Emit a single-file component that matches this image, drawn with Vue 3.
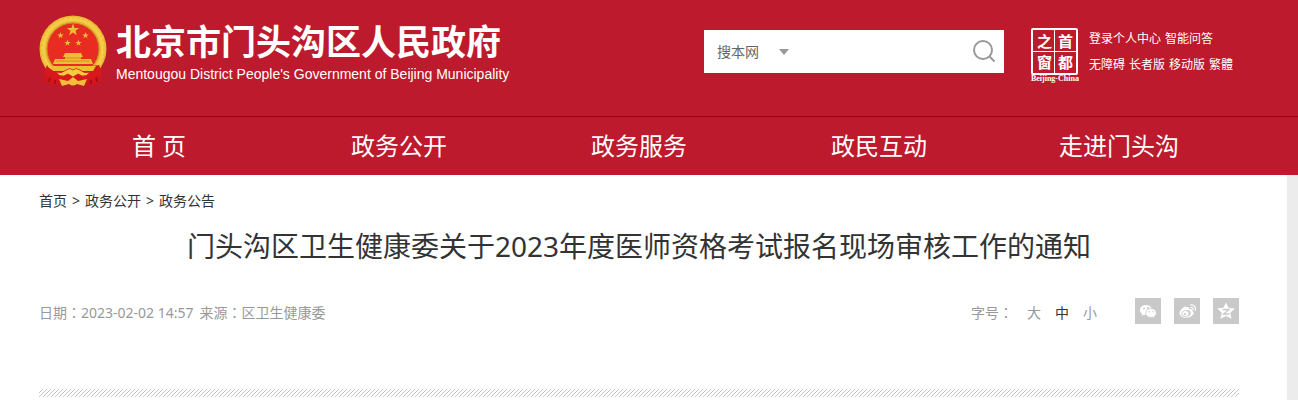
<template>
  <div class="page">
    <header class="header">
      <div class="container top">
        <a class="brand" href="#">
          <svg class="emblem" viewBox="0 0 68 72" aria-hidden="true">
            <path d="M9 48 L59 48 Q64 59 62 66 L53 71 L43 67 H25 L15 71 L6 67 Q4 60 9 48Z" fill="#d5151d" />
            <path d="M12 56 L10 67 M17 59 L16 69 M56 56 L58 67 M51 59 L52 69" stroke="#9c0b17" stroke-width="1.5" />
            <circle cx="34" cy="34" r="33.5" fill="#e9b62f" />
            <circle cx="34" cy="34" r="30" fill="none" stroke="#f4cc48" stroke-width="4" />
            <circle cx="34" cy="34" r="31" fill="none" stroke="#e9b838" stroke-width="1" stroke-dasharray="2 3" />
            <circle cx="34" cy="34" r="26" fill="#e82c22" stroke="#c8871f" stroke-width="1" />
            <g fill="#edbd35">
              <polygon :points="starPoints(34, 15, 6.5)" />
              <polygon v-for="star in smallStars" :key="star.x" :points="starPoints(star.x, star.y, 3.4)" />
              <path d="M26 38h16l2 4h-2v2h10l2 5H14l2-5h10v-2h-2z" />
            </g>
            <path d="M26 43h16M17 46h34" stroke="#d98e22" stroke-width="1" />
            <path d="M8 50 Q10 55 18 56 L60 50 L63 58 Q53 67 42 66 L34 69 L26 66 Q14 67 5 58Z" fill="#d8181d" />
            <path d="M11 51h46l-3 5H14z" fill="#edbd35" />
            <path d="M17 57 Q23 59 27 55 Q31 52 34 55 Q37 52 41 55 Q45 59 51 57 Q48 62 43 61 L39 59 L34 62 L29 59 L25 61 Q20 62 17 57Z" fill="#f6cb42" stroke="#d8181d" stroke-width=".8" />
            <path d="M20 64 L29 66 L34 62 L39 66 L48 64 L45 71 L38 69 Q34 72 30 69 L23 71Z" fill="#f1be37" />
          </svg>
          <span class="brand-text">
            <strong class="brand-name">北京市门头沟区人民政府</strong>
            <span class="brand-en">Mentougou District People's Government of Beijing Municipality</span>
          </span>
        </a>
        <div class="tools">
          <form class="search" role="search" @submit.prevent>
            <div class="scope">
              <select v-model="scope" aria-label="搜索范围">
                <option value="site">搜本网</option>
              </select>
              <svg class="caret" viewBox="0 0 10 6" aria-hidden="true"><path d="M0 0h10L5 6z" fill="#999" /></svg>
            </div>
            <input v-model="keyword" class="keyword" type="text" aria-label="搜索关键词">
            <button class="search-btn" type="submit" aria-label="搜索">
              <svg viewBox="0 0 24 24" fill="none" stroke="#999" stroke-width="2" aria-hidden="true">
                <circle cx="11" cy="10" r="9" />
                <path d="M17 16l5.500 5.500" />
              </svg>
            </button>
          </form>
          <a class="capital" href="#">
            <span class="seal">
              <span v-for="char in sealChars" :key="char" class="seal-char">{{ char }}</span>
            </span>
            <span class="capital-en">Beijing-China</span>
          </a>
          <div class="quick">
            <div v-for="(row, index) in quickLinks" :key="index" class="quick-row">
              <a v-for="item in row" :key="item" href="#">{{ item }}</a>
            </div>
          </div>
        </div>
      </div>
      <nav class="nav">
        <div class="container nav-list">
          <a v-for="item in navItems" :key="item" href="#">{{ item }}</a>
        </div>
      </nav>
    </header>

    <main class="main">
      <div class="container">
        <div class="crumbs">
          <template v-for="(item, index) in crumbs" :key="item">
            <span v-if="index > 0">&gt;</span>
            <a href="#">{{ item }}</a>
          </template>
        </div>
        <h1 class="title">门头沟区卫生健康委关于2023年度医师资格考试报名现场审核工作的通知</h1>
        <div class="meta">
          <p class="source">
            <span>日期<span class="colon">：</span>2023-02-02 14:57</span>
            <span>来源<span class="colon">：</span>区卫生健康委</span>
          </p>
          <div class="meta-right">
            <div class="sizes">
              <span>字号<span class="colon">：</span></span>
              <button
                v-for="item in sizes"
                :key="item"
                type="button"
                :class="{ active: item === size }"
                @click="size = item"
              >{{ item }}</button>
            </div>
            <div class="share">
              <a href="#" aria-label="微信">
                <svg viewBox="0 0 26 26" aria-hidden="true">
                  <path d="M11 7c-3.400 0-6 2.200-6 5 0 1.600.8 3 2.200 3.900L6.600 18l2.300-1.200c.7.2 1.400.2 2.100.2 3.400 0 6-2.200 6-5s-2.600-5-6-5z" fill="#fff" />
                  <path d="M16 10.500c-3 0-5.400 2-5.400 4.500s2.400 4.500 5.400 4.500c.7 0 1.300-.1 1.900-.3l2 1.100-.6-1.900c1.300-.8 2.100-2 2.100-3.400 0-2.500-2.400-4.500-5.400-4.500z" fill="#fff" stroke="#c9c9c9" stroke-width=".8" />
                  <g fill="#c9c9c9"><circle cx="9" cy="10.500" r=".9" /><circle cx="13" cy="10" r=".9" /><circle cx="14.200" cy="13.800" r=".8" /><circle cx="18" cy="13.800" r=".8" /></g>
                </svg>
              </a>
              <a href="#" aria-label="微博">
                <svg viewBox="0 0 26 26" aria-hidden="true">
                  <path d="M11.500 9.500c1.200-.6 3.200-1 3.500.2.200.7-.2 1.300-.2 1.300 2-.4 3.900.2 3.300 2 1.500.5 2 1.500 1.300 3-1 2.300-4 3.800-7.400 3.800-3.500 0-6.500-1.800-6.500-4.500C5.500 12.500 10 7.800 11.800 8.500c.6.200.4.700-.3 1z" fill="#fff" />
                  <ellipse cx="12" cy="15.400" rx="4.800" ry="3.300" fill="#c9c9c9" transform="rotate(-8 12 15.400)" />
                  <ellipse cx="11.500" cy="15.600" rx="3.300" ry="2.500" fill="#fff" />
                  <circle cx="11" cy="16" r="1.100" fill="#c9c9c9" />
                  <path d="M16.500 7c3.300-.7 5.800 2.200 4.700 5.500M16.800 9.600c1.500-.3 2.500.9 2.100 2.300" fill="none" stroke="#fff" stroke-width="1.200" stroke-linecap="round" />
                </svg>
              </a>
              <a href="#" aria-label="QQ空间">
                <svg viewBox="0 0 26 26" aria-hidden="true">
                  <path d="M13 4.500l2.600 5.300 6.200.8-4.500 4.200 1.200 6-5.500-2.900-5.500 2.900 1.200-6-4.500-4.200 6.200-.8z" fill="#fff" />
                  <path d="M9.800 11.500h6.200l-5.500 4.500h6" fill="none" stroke="#c9c9c9" stroke-width="1.300" />
                </svg>
              </a>
            </div>
          </div>
        </div>
        <svg class="divider" aria-hidden="true">
          <defs>
            <pattern id="hatch" width="4" height="4" patternUnits="userSpaceOnUse">
              <path d="M-1 1l2-2M0 4l4-4M3 5l2-2" stroke="#c4c4c4" stroke-width="1" />
            </pattern>
          </defs>
          <rect width="100%" height="100%" fill="url(#hatch)" />
        </svg>
      </div>
    </main>
  </div>
</template>

<script setup>
import { ref } from 'vue'

const scope = ref('site')
const keyword = ref('')
const size = ref('中')

const sizes = ['大', '中', '小']
const sealChars = ['之', '首', '窗', '都']
const navItems = ['首 页', '政务公开', '政务服务', '政民互动', '走进门头沟']
const crumbs = ['首页', '政务公开', '政务公告']
const quickLinks = [
  ['登录个人中心', '智能问答'],
  ['无障碍', '长者版', '移动版', '繁體']
]
const smallStars = [
  { x: 21.5, y: 20.5 },
  { x: 46.5, y: 20.5 },
  { x: 28.5, y: 28 },
  { x: 39.5, y: 28 }
]

// five-pointed star around a centre
const starPoints = (cx, cy, r) => {
  const points = []
  for (let i = 0; i < 10; i++) {
    const radius = i % 2 === 0 ? r : r * 0.4
    const angle = (Math.PI / 5) * i - Math.PI / 2
    points.push(`${cx + radius * Math.cos(angle)},${cy + radius * Math.sin(angle)}`)
  }
  return points.join(' ')
}
</script>

<style>
body {
  margin: 0;
  background: #ececec;
}
</style>

<style scoped>
.page {
  display: flex;
  flex-direction: column;
  min-height: 100vh;
  font-family: "Noto Sans", "Noto Sans CJK SC", sans-serif;
  font-size: 14px;
  line-height: 20px;
  color: #333;
}
a {
  color: inherit;
  text-decoration: none;
}
.container {
  max-width: 1200px;
  margin: 0 auto;
}

/* header */
.header {
  background: #bd1a2d;
  color: #fff;
}
/* keeps the header in line with the article column */
.top,
.nav {
  padding-right: 20px;
}
.header .top {
  display: flex;
  justify-content: space-between;
  align-items: flex-start;
  min-height: 101px;
  padding-top: 15px;
}
.brand {
  display: flex;
  gap: 9px;
}
.emblem {
  width: 68px;
  height: 72px;
}
.brand-text {
  display: flex;
  flex-direction: column;
  padding-top: 4px;
}
.brand-name {
  font-family: "Noto Sans CJK SC", sans-serif;
  font-size: 35px;
  line-height: 42px;
  font-weight: 700;
  white-space: nowrap;
}
.brand-en {
  font-family: "Liberation Sans", Arial, sans-serif;
  font-size: 14px;
  line-height: 26px;
  white-space: nowrap;
}
.tools {
  display: flex;
  align-items: flex-start;
  padding-right: 6px;
}
.search {
  display: flex;
  width: 300px;
  height: 43px;
  margin: 15px 25px 0 0;
  background: #fff;
}
.scope {
  display: flex;
  align-items: center;
  padding-left: 13px;
}
.scope select {
  appearance: none;
  width: 62px;
  padding: 0;
  border: 0;
  background: none;
  font: inherit;
  color: #666;
}
.caret {
  width: 10px;
  height: 6px;
}
.keyword {
  flex: 1;
  min-width: 0;
  padding: 0 12px;
  border: 0;
  background: none;
  font: inherit;
  outline: none;
}
.search-btn {
  display: flex;
  align-items: center;
  padding: 0 8px;
  border: 0;
  background: none;
}
.search-btn svg {
  width: 24px;
  height: 24px;
}
.capital {
  display: flex;
  flex-direction: column;
  align-items: center;
  width: 52px;
  margin: 13px 8px 0 0;
}
.seal {
  display: grid;
  grid-template-columns: 20px 20px;
  gap: 1px;
  padding: 1px;
  border: 2px solid #fff;
  border-radius: 2px;
  background: linear-gradient(#fff, #fff) center / 1px 100% no-repeat, linear-gradient(#fff, #fff) center / 100% 1px no-repeat;
}
.seal-char {
  font-family: "Noto Sans CJK SC", sans-serif;
  font-size: 15px;
  line-height: 20px;
  font-weight: 700;
  text-align: center;
}
.capital-en {
  font-family: "Liberation Serif", "Times New Roman", serif;
  font-size: 8px;
  line-height: 8px;
  font-weight: 700;
  white-space: nowrap;
}
.quick {
  padding-top: 11px;
  font-size: 12px;
  line-height: 26px;
}
.quick-row {
  display: flex;
  gap: 4px;
  white-space: nowrap;
}
.nav {
  border-top: 1px solid #a0000f;
}
.nav-list {
  display: flex;
  font-size: 24px;
  line-height: 58px;
}
.nav-list a {
  flex: 1;
  text-align: center;
  white-space: nowrap;
}

/* article */
.main {
  flex: 1;
  margin-right: 11px;
  padding: 16px 9px 3px 0;
  background: #fff;
}
.crumbs {
  display: flex;
  gap: 5px;
}
.title {
  margin: 14px 0 0;
  font-size: 28px;
  line-height: 42px;
  font-weight: 400;
  text-align: center;
}
.meta {
  display: flex;
  justify-content: space-between;
  align-items: flex-end;
  margin-top: 31px;
  line-height: 22px;
  color: #999;
}
.colon {
  font-family: "Noto Sans CJK TC", sans-serif;
}
.source {
  display: flex;
  gap: 6px;
  margin: 0;
}
.meta-right {
  display: flex;
  align-items: flex-end;
  gap: 38px;
}
.sizes {
  display: flex;
  gap: 14px;
}
.sizes button {
  padding: 0;
  border: 0;
  background: none;
  font: inherit;
  color: inherit;
  cursor: pointer;
}
.sizes .active {
  color: #333;
}
.share {
  display: flex;
  gap: 13px;
}
.share a {
  display: block;
  width: 26px;
  height: 26px;
  background: #c9c9c9;
}
.share svg {
  display: block;
}
.divider {
  display: block;
  width: 100%;
  height: 8px;
  margin-top: 65px;
}
</style>
